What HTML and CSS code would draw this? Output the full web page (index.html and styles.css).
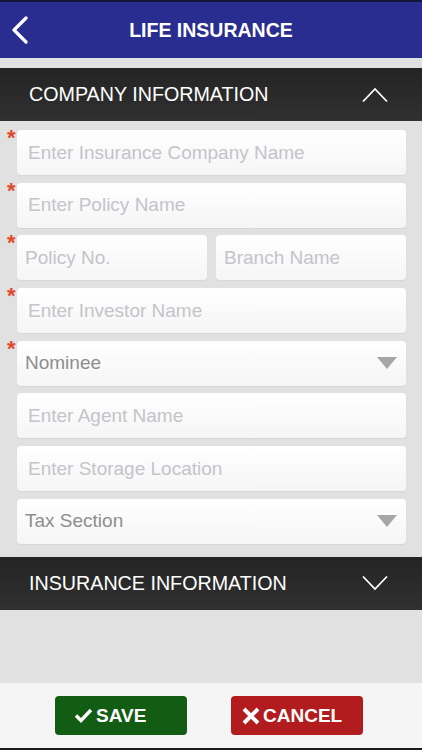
FILE: index.html
```html
<!doctype html>
<html lang="en">

<head>
    <meta charset="utf-8">
    <meta name="viewport" content="width=device-width, initial-scale=1">
    <title>Life Insurance</title>
    <link rel="stylesheet" href="styles.css">
</head>

<body>
    <div class="page">
        <header class="topbar">
            <a class="back" href="#">
                <svg width="18" height="28" viewBox="0 0 18 28">
                    <polyline points="15,2 3,14 15,26" fill="none" stroke="#fff" stroke-width="3.2" stroke-linecap="round" stroke-linejoin="round"/>
                </svg>
            </a>
            <h1>LIFE INSURANCE</h1>
        </header>

        <main class="content">
            <div class="section-head">
                <span>COMPANY INFORMATION</span>
                <svg width="26" height="16" viewBox="0 0 26 16">
                    <polyline points="1,14.5 13,2 25,14.5" fill="none" stroke="#fff" stroke-width="1.8"/>
                </svg>
            </div>

            <div class="fields">
                <div class="row req">
                    <input class="field" type="text" placeholder="Enter Insurance Company Name">
                </div>
                <div class="row req">
                    <input class="field" type="text" placeholder="Enter Policy Name">
                </div>
                <div class="row req split">
                    <input class="field" type="text" placeholder="Policy No.">
                    <input class="field" type="text" placeholder="Branch Name">
                </div>
                <div class="row req">
                    <input class="field" type="text" placeholder="Enter Investor Name">
                </div>
                <div class="row req">
                    <div class="field select">
                        <span>Nominee</span>
                        <i class="caret"></i>
                    </div>
                </div>
                <div class="row">
                    <input class="field" type="text" placeholder="Enter Agent Name">
                </div>
                <div class="row">
                    <input class="field" type="text" placeholder="Enter Storage Location">
                </div>
                <div class="row">
                    <div class="field select">
                        <span>Tax Section</span>
                        <i class="caret"></i>
                    </div>
                </div>
            </div>

            <div class="section-head">
                <span>INSURANCE INFORMATION</span>
                <svg width="26" height="16" viewBox="0 0 26 16">
                    <polyline points="1,1.5 13,14 25,1.5" fill="none" stroke="#fff" stroke-width="1.8"/>
                </svg>
            </div>
        </main>

        <footer class="actions">
            <button class="btn save">
                <svg width="19" height="15" viewBox="0 0 19 15">
                    <polyline points="2,7.5 7,12.5 17,2" fill="none" stroke="#fff" stroke-width="3.4"/>
                </svg>
                SAVE
            </button>
            <button class="btn cancel">
                <svg width="18" height="18" viewBox="0 0 18 18">
                    <path d="M2 2 L16 16 M16 2 L2 16" fill="none" stroke="#fff" stroke-width="4"/>
                </svg>
                CANCEL
            </button>
        </footer>
    </div>
</body>

</html>
```

FILE: styles.css
```css
* {
    box-sizing: border-box;
}

body {
    margin: 0;
    background-color: #e1e1e1;
    font-family: "Liberation Sans", Arial, sans-serif;
}

.page {
    display: flex;
    flex-direction: column;
    height: 100vh;
    border-bottom: 2px solid #1c1c1c;
}

.topbar {
    position: relative;
    display: flex;
    align-items: center;
    justify-content: center;
    height: 58px;
    flex-shrink: 0;
    border-top: 2px solid #15153a;
    background-color: #2a2d90;
}

.topbar h1 {
    margin: 0;
    color: #fff;
    font-size: 19.5px;
    font-weight: bold;
}

.back {
    position: absolute;
    left: 11px;
    top: 14px;
    display: block;
}

.back svg {
    display: block;
}

.content {
    flex: 1;
    padding-top: 10px;
}

.section-head {
    display: flex;
    align-items: center;
    justify-content: space-between;
    height: 53px;
    padding: 0 34px 0 29px;
    background: linear-gradient(#242424, #303030);
    color: #fff;
    font-size: 19.7px;
}

.section-head svg {
    display: block;
}

.fields {
    display: flex;
    flex-direction: column;
    gap: 7.7px;
    padding: 9px 16px 13px 17px;
}

.row {
    position: relative;
    display: flex;
    gap: 9px;
}

.row.req::before {
    content: "*";
    position: absolute;
    left: -10px;
    top: -3px;
    color: #e2482a;
    font-size: 22px;
    font-weight: bold;
    line-height: 1;
}

.field {
    flex: 1;
    min-width: 0;
    height: 45px;
    padding: 0 11px;
    border: none;
    border-radius: 4px;
    background: linear-gradient(#ffffff, #f5f5f6);
    box-shadow: 0 1px 1px rgba(0, 0, 0, 0.05);
    font-family: "Liberation Sans", Arial, sans-serif;
    font-size: 19px;
    color: #333;
    outline: none;
}

.field::placeholder {
    color: #c4c4c9;
}

.split .field {
    padding-left: 8px;
}

.select {
    display: flex;
    align-items: center;
    justify-content: space-between;
    padding: 0 9px 0 8px;
    color: #8e8e8e;
}

.caret {
    width: 0;
    height: 0;
    border-left: 10px solid transparent;
    border-right: 10px solid transparent;
    border-top: 12px solid #a6a6a6;
}

.actions {
    display: flex;
    gap: 44px;
    height: 65px;
    flex-shrink: 0;
    padding: 13px 0 0 55px;
    background-color: #f5f5f5;
}

.btn {
    display: flex;
    align-items: center;
    gap: 3px;
    width: 132px;
    height: 39px;
    border: none;
    border-radius: 4px;
    color: #fff;
    font-family: "Liberation Sans", Arial, sans-serif;
    font-size: 19px;
    font-weight: bold;
}

.btn svg {
    display: block;
}

.save {
    padding-left: 19px;
    background-color: #135c14;
}

.cancel {
    padding-left: 11px;
    background-color: #b21c1e;
}
```
